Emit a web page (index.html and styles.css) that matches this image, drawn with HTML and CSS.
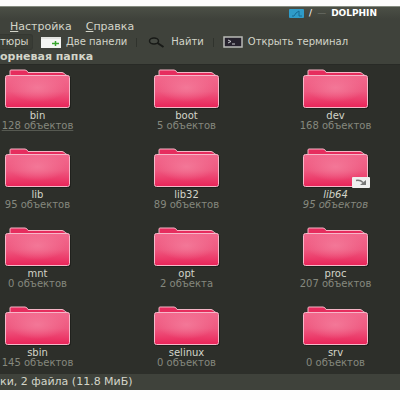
FILE: index.html
```html
<!DOCTYPE html>
<html lang="ru">
<head>
<meta charset="utf-8">
<title>/ — Dolphin</title>
<link rel="stylesheet" href="styles.css">
</head>
<body>
<svg class="defs" aria-hidden="true">
  <defs>
    <linearGradient id="front" x1="0" y1="0" x2="0" y2="1">
      <stop offset="0" stop-color="#f2698d"/>
      <stop offset=".5" stop-color="#ee5980"/>
      <stop offset="1" stop-color="#ea2459"/>
    </linearGradient>
    <radialGradient id="shine" cx=".5" cy=".38" r=".45">
      <stop offset="0" stop-color="#f47c9b" stop-opacity=".85"/>
      <stop offset="1" stop-color="#f47c9b" stop-opacity="0"/>
    </radialGradient>
    <symbol id="folder" viewBox="0 0 68 42">
      <path d="M2 8v29q0 3 3 3h59q3 0 3-3V8z" fill="#171916" opacity=".6"/>
      <path d="M6 8V2q0-1 1-1h14q2 0 3 2.500h34q2 0 3 2l3 2.500z" fill="#e62d5e"/>
      <path d="M6 8V2q0-1 1-1h14q2 0 3 2.500h34q2 0 3 2l3 1.500" fill="none" stroke="#f5b5c5"/>
      <rect x="1.500" y="6.500" width="64" height="32" rx="2" fill="url(#front)"/>
      <rect x="1.500" y="6.500" width="64" height="32" rx="2" fill="url(#shine)" stroke="#f7b6c8"/>
    </symbol>
  </defs>
</svg>
<div class="window">
  <header class="titlebar">
    <svg class="app-icon" viewBox="0 0 15 9"><rect width="15" height="9" rx="1" fill="#2f9cc9"/><path d="M3 7h2l2-3 3-2v5h3" fill="none" stroke="#176b94"/></svg>
    <span>/</span><span class="dash">—</span><h1>DOLPHIN</h1>
  </header>
  <nav class="menubar">
    <button type="button"><u>Н</u>астройка</button>
    <button type="button"><u>С</u>правка</button>
  </nav>
  <div class="toolbar">
    <button type="button" class="pressed">тюры</button>
    <button type="button" class="tool split">
      <svg width="20" height="11" viewBox="0 0 20 11"><rect width="20" height="11" fill="#f4f5f3"/><path d="M0 1h20" stroke="#d0d2ce"/><path d="M11 6.500h7M14.500 4v5" stroke="#37a52c" stroke-width="1.500"/></svg>
      Две панели
    </button>
    <span class="separator"></span>
    <button type="button" class="tool find">
      <svg width="17" height="11" viewBox="0 0 17 11"><ellipse cx="6" cy="4" rx="4.500" ry="3" fill="#464a43" stroke="#181a17" stroke-width="1.500"/><path d="M9.500 6l6 4" stroke="#181a17" stroke-width="2"/></svg>
      Найти
    </button>
    <span class="separator"></span>
    <button type="button" class="tool">
      <svg width="20" height="12" viewBox="0 0 20 12"><rect x="1" y="1" width="18" height="10" fill="#26222d" stroke="#b9bab7" stroke-width="1.500"/><path d="M5 4l3 1.500-3 1.500M9 8h3" fill="none" stroke="#c9c9cd"/></svg>
      Открыть терминал
    </button>
  </div>
  <div class="location">орневая папка</div>
  <main class="files">
    <div class="file focused"><svg class="folder"><use href="#folder"/></svg><span class="name">bin</span><span class="count">128 объектов</span></div>
    <div class="file"><svg class="folder"><use href="#folder"/></svg><span class="name">boot</span><span class="count">5 объектов</span></div>
    <div class="file"><svg class="folder"><use href="#folder"/></svg><span class="name">dev</span><span class="count">168 объектов</span></div>
    <div class="file"><svg class="folder"><use href="#folder"/></svg><span class="name">lib</span><span class="count">95 объектов</span></div>
    <div class="file"><svg class="folder"><use href="#folder"/></svg><span class="name">lib32</span><span class="count">89 объектов</span></div>
    <div class="file link"><span class="linked"><svg class="folder"><use href="#folder"/></svg><svg class="emblem" viewBox="0 0 18 11"><rect width="18" height="11" rx="1" fill="#efefef"/><path d="M4 3.500q4-1 7 2" fill="none" stroke="#777" stroke-width="1.500"/><path d="M14 3v5H8z" fill="#777"/></svg></span><span class="name">lib64</span><span class="count">95 объектов</span></div>
    <div class="file"><svg class="folder"><use href="#folder"/></svg><span class="name">mnt</span><span class="count">0 объектов</span></div>
    <div class="file"><svg class="folder"><use href="#folder"/></svg><span class="name">opt</span><span class="count">2 объекта</span></div>
    <div class="file"><svg class="folder"><use href="#folder"/></svg><span class="name">proc</span><span class="count">207 объектов</span></div>
    <div class="file"><svg class="folder"><use href="#folder"/></svg><span class="name">sbin</span><span class="count">145 объектов</span></div>
    <div class="file"><svg class="folder"><use href="#folder"/></svg><span class="name">selinux</span><span class="count">0 объектов</span></div>
    <div class="file"><svg class="folder"><use href="#folder"/></svg><span class="name">srv</span><span class="count">0 объектов</span></div>
  </main>
  <footer class="statusbar">ки, 2 файла (11.8 МиБ)</footer>
</div>
</body>
</html>
```
FILE: styles.css
```css
* { box-sizing: border-box; }
body {
  margin: 0;
  padding: 6px 0 10px;
  background: #fdfdfd;
  color: #d3d5c9;
  font: 11px/12px "DejaVu Sans", sans-serif;
}
.defs { position: absolute; width: 0; height: 0; }
.window {
  overflow: hidden;
  background: #3f423b;
  border-top: 1px solid #858b80;
}
button {
  margin: 0;
  padding: 0;
  border: 0;
  background: none;
  color: inherit;
  font: inherit;
}
.titlebar {
  display: flex;
  justify-content: flex-end;
  align-items: center;
  gap: 5px;
  height: 12px;
  padding-right: 23px;
  background: linear-gradient(#4b4f46, #3f423b);
  color: #fff;
  font-size: 9px;
}
.titlebar h1 { margin: 0; font-size: 9px; line-height: 12px; }
.app-icon { width: 15px; height: 9px; }
.dash { color: #777b72; }
.menubar {
  display: flex;
  gap: 14px;
  height: 15px;
  padding-left: 10px;
}
.toolbar {
  display: flex;
  align-items: center;
  height: 16px;
  font-size: 10px;
  white-space: nowrap;
}
.pressed {
  width: 33px;
  height: 16px;
  margin-right: 8px;
  text-align: left;
  background: #393c35;
  border: 1px solid #353832;
  border-left: 0;
  border-radius: 0 3px 3px 0;
}
.tool { display: flex; align-items: center; gap: 5px; }
.find { gap: 6px; padding-left: 2px; }
.separator {
  width: 1px;
  height: 9px;
  margin: 0 9px;
  background: #30332d;
}
.location {
  height: 14px;
  font-weight: bold;
  line-height: 14px;
}
.files {
  display: grid;
  grid-template-columns: repeat(3, 1fr);
  grid-auto-rows: 79px;
  height: 310px;
  padding-top: 4px;
  margin: 0 -10px 0 -37px;
  background: #2d2f2a;
  border-top: 1px solid #282a26;
}
.file {
  display: flex;
  flex-direction: column;
  align-items: center;
  line-height: 10px;
}
.folder { display: block; width: 68px; height: 42px; }
.linked { position: relative; }
.emblem { position: absolute; right: 0; bottom: 2px; width: 18px; height: 11px; }
.name { font-size: 10px; }
.count { font-size: 10px; color: #85887e; }
.focused .count { text-decoration: underline; text-decoration-color: #565951; }
.link .name, .link .count { font-style: italic; }
.statusbar { height: 16px; line-height: 15px; }
```
